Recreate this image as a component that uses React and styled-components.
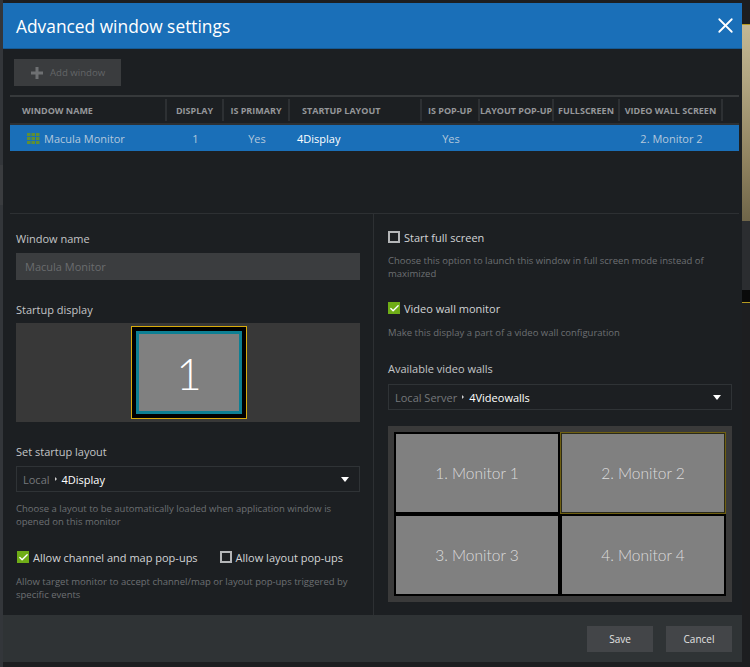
import React from 'react';
import styled, { createGlobalStyle } from 'styled-components';
import { Check, X } from 'lucide-react';

const GlobalStyle = createGlobalStyle`
  html, body {
    margin: 0;
    height: 100%;
    overflow: hidden;
  }
  body {
    font-family: "Open Sans", "Liberation Sans", sans-serif;
    background-color: #1d1e20;
    background-image:
      linear-gradient(#c4b894, #b0a480 30%, #8f825f 70%, #6f6549),
      linear-gradient(#0a0a0a, #0a0a0a),
      linear-gradient(#b59a20, #b59a20),
      linear-gradient(#b59a20, #b59a20),
      linear-gradient(#2b2d30, #2b2d30),
      linear-gradient(#3a3c3f, #3a3c3f),
      linear-gradient(#33363a, #33363a);
    background-repeat: no-repeat;
    background-size: 8px 196px, 8px 12px, 8px 1px, 8px 1px, 8px 70px, 3px 40px, 3px 667px;
    background-position: 742px 25px, 742px 290px, 742px 24px, 742px 302px, 742px 221px, 0 165px, 0 0;
  }
`;

const columns = '157px 57px 66px 132px 58px 74px 66px 103px 16px';

const Dialog = styled.div`
  margin: 3px 0 0 3px;
  width: 739px;
  height: 659px;
  display: flex;
  flex-direction: column;
  background: #1c1f22;
`;

const Header = styled.div`
  height: 46px;
  flex: none;
  display: flex;
  align-items: center;
  justify-content: space-between;
  padding: 0 4px 0 13px;
  background: #1a6fb8;
  color: #fff;
  font-size: 17.35px;
  border-bottom: 1px solid #155a94;
  box-sizing: border-box;
`;

const Toolbar = styled.div`
  height: 46px;
  flex: none;
  padding: 10px 0 0 11px;
  box-sizing: border-box;
`;

const AddButton = styled.div`
  width: 107px;
  height: 27px;
  display: flex;
  align-items: center;
  gap: 7px;
  padding-left: 17px;
  box-sizing: border-box;
  background: #3a3c3e;
  color: #636567;
  font-size: 9.6px;
`;

const TableArea = styled.div`
  height: 119px;
  flex: none;
  margin: 0 3px 0 7px;
  border-top: 2px solid #36393b;
  border-bottom: 1px solid #2d3033;
  box-sizing: border-box;
`;

const HeaderRow = styled.div`
  display: grid;
  grid-template-columns: ${columns};
  height: 28px;
  padding-top: 2px;
  box-sizing: border-box;
  border-bottom: 2px solid #2d3033;
`;

const HeadCell = styled.div`
  display: flex;
  align-items: center;
  justify-content: ${(p) => (p.$left ? 'flex-start' : 'center')};
  padding-left: ${(p) => (p.$left ? '12px' : '0')};
  border-right: 2px solid #2d3033;
  height: 22px;
  color: #95979a;
  font-size: 9px;
  font-weight: 700;
  white-space: nowrap;
  overflow: hidden;
`;

const DataRow = styled.div`
  display: grid;
  grid-template-columns: ${columns};
  height: 26px;
  align-items: center;
  background: #1a6fb8;
  color: #b4c8dc;
  font-size: 11px;
`;

const DataCell = styled.div`
  text-align: center;
  white-space: nowrap;
`;

const NameCell = styled.div`
  display: flex;
  align-items: center;
  gap: 4px;
  padding-left: 17px;
`;

const LayoutCell = styled.div`
  padding-left: 7px;
  color: #fff;
  font-weight: 500;
`;

const Panels = styled.div`
  flex: 1;
  display: flex;
  min-height: 0;
`;

const LeftPanel = styled.div`
  width: 371px;
  flex: none;
  padding: 17px 13px 0;
  box-sizing: border-box;
  border-right: 1px solid #2d3033;
`;

const RightPanel = styled.div`
  flex: 1;
  padding: 16px 10px 0 14px;
  box-sizing: border-box;
`;

const Label = styled.div`
  height: 16px;
  line-height: 16px;
  margin-top: ${(p) => p.$top || 0}px;
  color: #c3c5c7;
  font-size: 11px;
`;

const NameInput = styled.div`
  height: 27px;
  margin-top: 6px;
  padding-left: 9px;
  display: flex;
  align-items: center;
  background: #3b3d3f;
  color: #6a6c6e;
  font-size: 11px;
`;

const DisplayBox = styled.div`
  height: 99px;
  margin-top: 5px;
  padding-left: 2px;
  box-sizing: border-box;
  display: flex;
  align-items: center;
  justify-content: center;
  background: #383838;
`;

const DisplayTile = styled.div`
  width: 116px;
  height: 93px;
  box-sizing: border-box;
  border: 1px solid #d9ac0c;
  background: #000;
  padding: 4px;
`;

const DisplayInner = styled.div`
  height: 100%;
  box-sizing: border-box;
  border: 3px solid #0d7f93;
  background: #808080;
  color: #fff;
  font-family: Lato, "Open Sans", sans-serif;
  font-size: 44px;
  font-weight: 300;
  display: flex;
  align-items: center;
  justify-content: center;
`;

const Select = styled.div`
  height: 26px;
  margin-top: ${(p) => p.$top}px;
  display: flex;
  align-items: center;
  gap: 5px;
  padding: 0 10px 0 6px;
  box-sizing: border-box;
  border: 1px solid #2f3336;
  color: #75787b;
  font-size: 11px;
`;

const Chevron = styled.span`
  width: 0;
  height: 0;
  border-left: 2px solid #d0d0d0;
  border-top: 2px solid transparent;
  border-bottom: 2px solid transparent;
`;

const SelectValue = styled.span`
  flex: 1;
  color: #fff;
  font-weight: 500;
`;

const Caret = styled.span`
  width: 0;
  height: 0;
  border-top: 5px solid #fff;
  border-left: 4px solid transparent;
  border-right: 4px solid transparent;
`;

const Hint = styled.div`
  margin-top: ${(p) => p.$top}px;
  color: #6d7073;
  font-size: 9.5px;
  line-height: 13px;
`;

const CheckRow = styled.div`
  height: 14px;
  margin-top: ${(p) => p.$top || 0}px;
  display: flex;
  align-items: center;
  gap: 4px;
  padding-left: ${(p) => (p.$inset ? 1 : 0)}px;
  color: #d2d4d6;
  font-size: 11px;
`;

const Box = styled.span`
  width: 12px;
  height: 12px;
  flex: none;
  box-sizing: border-box;
  display: flex;
  align-items: center;
  justify-content: center;
  margin-left: ${(p) => p.$gap || 0}px;
  border: ${(p) => (p.$on ? 'none' : '2px solid #b4b6b8')};
  background: ${(p) => (p.$on ? '#6fad17' : 'transparent')};
  color: #fff;
`;

const WallBox = styled.div`
  height: 176px;
  margin-top: 16px;
  padding: 6px;
  box-sizing: border-box;
  background: #3a3a3a;
`;

const WallGrid = styled.div`
  height: 100%;
  display: grid;
  grid-template-columns: 1fr 1fr;
  grid-template-rows: 1fr 1fr;
  background: #000;
`;

const WallTile = styled.div`
  display: flex;
  align-items: center;
  justify-content: center;
  background: #808080;
  border: ${(p) => (p.$active ? '1px solid #6f5f10' : '2px solid #000')};
  box-shadow: ${(p) => (p.$active ? 'inset 0 0 0 1px #2a2a1a' : 'none')};
  color: #dcdcdc;
  font-family: Lato, "Open Sans", sans-serif;
  font-size: 15.5px;
  font-weight: 300;
`;

const Footer = styled.div`
  height: 47px;
  flex: none;
  display: flex;
  justify-content: flex-end;
  gap: 13px;
  padding: 11px 10px 0 0;
  box-sizing: border-box;
  background: #2f3335;
`;

const FooterButton = styled.div`
  width: 66px;
  height: 26px;
  display: flex;
  align-items: center;
  justify-content: center;
  background: #434548;
  color: #e2e2e2;
  font-size: 10px;
`;

const GridIcon = () => (
  <svg width="13" height="11" viewBox="0 0 13 11" fill="#5f8f35">
    {[0, 4, 8].map((y) =>
      [0, 4.5, 9].map((x) => <rect key={`${x}-${y}`} x={x} y={y} width="3.5" height="3" />)
    )}
  </svg>
);

const PlusIcon = () => (
  <svg width="12" height="12" viewBox="0 0 12 12" fill="#6e7072">
    <path d="M4.5 0h3v4.5H12v3H7.5V12h-3V7.5H0v-3h4.5z" />
  </svg>
);

const heads = ['WINDOW NAME', 'DISPLAY', 'IS PRIMARY', 'STARTUP LAYOUT', 'IS POP-UP', 'LAYOUT POP-UP', 'FULLSCREEN', 'VIDEO WALL SCREEN'];
const monitors = ['1. Monitor 1', '2. Monitor 2', '3. Monitor 3', '4. Monitor 4'];

function App() {
  return (
    <>
      <GlobalStyle />
      <Dialog>
        <Header>
          Advanced window settings
          <X size={25} strokeWidth={1.7} />
        </Header>
        <Toolbar>
          <AddButton>
            <PlusIcon />
            Add window
          </AddButton>
        </Toolbar>
        <TableArea>
          <HeaderRow>
            {heads.map((h, i) => (
              <HeadCell key={h} $left={i === 0 || i === 3}>{h}</HeadCell>
            ))}
          </HeaderRow>
          <DataRow>
            <NameCell>
              <GridIcon />
              Macula Monitor
            </NameCell>
            <DataCell>1</DataCell>
            <DataCell>Yes</DataCell>
            <LayoutCell>4Display</LayoutCell>
            <DataCell>Yes</DataCell>
            <DataCell />
            <DataCell />
            <DataCell>2. Monitor 2</DataCell>
          </DataRow>
        </TableArea>
        <Panels>
          <LeftPanel>
            <Label>Window name</Label>
            <NameInput>Macula Monitor</NameInput>
            <Label $top={22}>Startup display</Label>
            <DisplayBox>
              <DisplayTile>
                <DisplayInner>1</DisplayInner>
              </DisplayTile>
            </DisplayBox>
            <Label $top={22}>Set startup layout</Label>
            <Select $top={6}>
              Local <Chevron /> <SelectValue>4Display</SelectValue> <Caret />
            </Select>
            <Hint $top={10}>Choose a layout to be automatically loaded when application window is opened on this monitor</Hint>
            <CheckRow $top={22} $inset>
              <Box $on><Check size={11} strokeWidth={3} /></Box>
              Allow channel and map pop-ups
              <Box $gap={18} />
              Allow layout pop-ups
            </CheckRow>
            <Hint $top={11}>Allow target monitor to accept channel/map or layout pop-ups triggered by specific events</Hint>
          </LeftPanel>
          <RightPanel>
            <CheckRow>
              <Box />
              Start full screen
            </CheckRow>
            <Hint $top={10}>Choose this option to launch this window in full screen mode instead of maximized</Hint>
            <CheckRow $top={21}>
              <Box $on><Check size={11} strokeWidth={3} /></Box>
              Video wall monitor
            </CheckRow>
            <Hint $top={11}>Make this display a part of a video wall configuration</Hint>
            <Label $top={22}>Available video walls</Label>
            <Select $top={7}>
              Local Server <Chevron /> <SelectValue>4Videowalls</SelectValue> <Caret />
            </Select>
            <WallBox>
              <WallGrid>
                {monitors.map((m, i) => (
                  <WallTile key={m} $active={i === 1}>{m}</WallTile>
                ))}
              </WallGrid>
            </WallBox>
          </RightPanel>
        </Panels>
        <Footer>
          <FooterButton>Save</FooterButton>
          <FooterButton>Cancel</FooterButton>
        </Footer>
      </Dialog>
    </>
  );
}

export default App;
